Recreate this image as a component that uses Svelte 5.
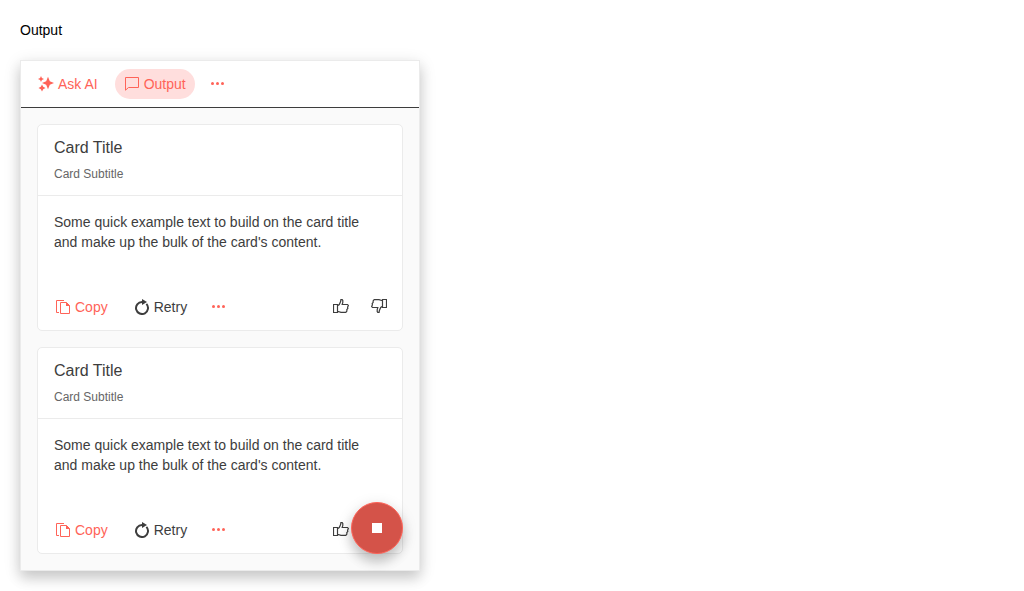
<script>
  let active = $state('output');
  const cards = [1, 2].map((id) => ({
    id,
    title: 'Card Title',
    subtitle: 'Card Subtitle',
    text: "Some quick example text to build on the card title and make up the bulk of the card's content."
  }));
</script>

{#snippet more()}
  <svg viewBox="0 0 16 16" aria-hidden="true">
    <g fill="currentColor">
      <circle cx="2.5" cy="7.5" r="1.5" /><circle cx="7.5" cy="7.5" r="1.5" /><circle cx="12.5" cy="7.5" r="1.5" />
    </g>
  </svg>
{/snippet}

<main>
  <div class="label">Output</div>
  <section class="prompt" aria-label="AI prompt">
    <header class="toolbar">
      <button class="btn primary" class:selected={active === 'ask'} onclick={() => (active = 'ask')}>
        <svg viewBox="0 0 16 16" aria-hidden="true">
          <path fill="currentColor" d="M10 .8 L11.8 5.2 L16 7 L11.8 8.8 L10 13.2 L8.2 8.8 L4 7 L8.2 5.2Z M3 0 L3.9 2.1 L6 3 L3.9 3.9 L3 6 L2.1 3.9 L0 3 L2.1 2.1Z M4 8.5 L5.2 10.8 L7.5 12 L5.2 13.2 L4 15.5 L2.8 13.2 L.5 12 L2.8 10.8Z" />
        </svg>
        <span>Ask AI</span>
      </button>
      <button class="btn primary" class:selected={active === 'output'} onclick={() => (active = 'output')}>
        <svg viewBox="0 0 16 16" aria-hidden="true">
          <path fill="none" stroke="currentColor" d="M1.5 1.5H14.5V11.5H4.5L1.5 14.2Z" />
        </svg>
        <span>Output</span>
      </button>
      <button class="btn primary square" aria-label="More views">{@render more()}</button>
    </header>

    <div class="content">
      {#each cards as card (card.id)}
        <article class="card">
          <div class="card-header">
            <div class="title">{card.title}</div>
            <div class="subtitle">{card.subtitle}</div>
          </div>
          <p>{card.text}</p>
          <div class="actions">
            <button class="btn primary">
              <svg viewBox="0 0 16 16" aria-hidden="true">
                <path fill="none" stroke="currentColor" d="M4 13.5H1.5V1.5H9M5.5 3.5H11.5L14.5 6.5V14.5H5.5Z" />
                <path fill="currentColor" d="M11 3L15 7H11Z" />
              </svg>
              <span>Copy</span>
            </button>
            <button class="btn">
              <svg viewBox="0 0 16 16" aria-hidden="true">
                <path fill="none" stroke="currentColor" stroke-width="2" d="M12.4 4.9A6 6 0 1 1 8 3" />
                <path fill="currentColor" d="M8 0L13 3L8 6Z" />
              </svg>
              <span>Retry</span>
            </button>
            <button class="btn primary square" aria-label="More actions">{@render more()}</button>
            <span class="spacer"></span>
            <button class="btn square" aria-label="Like">
              <svg viewBox="0 0 16 16" aria-hidden="true">
                <path fill="none" stroke="currentColor" stroke-width="1.2" d="M.5 5.5H4.5V13.5H.5ZM4.5 6.8L6.3 5.5L7.6 2.5L7.9.6H9.2L9.8 1.5V3.5L9.2 5.5H14.5L15.4 6.4L14.6 8.2L14.8 9.5L13.8 10.6L13.9 12L12.8 13.4H8L4.5 12.3" />
              </svg>
            </button>
            <button class="btn square" aria-label="Dislike">
              <svg viewBox="0 0 16 16" aria-hidden="true">
                <path fill="none" stroke="currentColor" stroke-width="1.2" d="M15.5 8.5H11.5V.5H15.5ZM11.5 7.2L9.7 8.5L8.4 11.5L8.1 13.4H6.8L6.2 12.5V10.5L6.8 8.5H1.5L.6 7.6L1.4 5.8L1.2 4.5L2.2 3.4L2.1 2L3.2.6H8L11.5 1.7" />
              </svg>
            </button>
          </div>
        </article>
      {/each}
    </div>

    <button class="fab" aria-label="Stop">
      <svg viewBox="0 0 16 16" aria-hidden="true"><path fill="currentColor" d="M3 3H13V13H3Z" /></svg>
    </button>
  </section>
</main>

<style>
  :global(body) {
    background: #fff;
  }
  main {
    display: flex;
    flex-direction: column;
    gap: 20px;
    padding: 20px;
    font: 14px/20px "Liberation Sans", Arial, sans-serif;
    color: #000;
  }
  .prompt {
    position: relative;
    box-sizing: border-box;
    width: 100%;
    max-width: 400px;
    border: 1px solid #ebebeb;
    background: #fafafa;
    color: #3d3d3d;
    box-shadow: 0 4px 16px rgba(0, 0, 0, 0.14), 0 8px 12px rgba(0, 0, 0, 0.12);
  }
  .toolbar {
    display: flex;
    gap: 8px;
    padding: 8px;
    background: #fff;
    border-bottom: 1px solid #3d3d3d;
  }
  .btn {
    display: inline-flex;
    align-items: center;
    justify-content: center;
    gap: 4px;
    box-sizing: border-box;
    height: 30px;
    padding: 4px 8px;
    border: 1px solid transparent;
    border-radius: 4px;
    background: none;
    color: #3d3d3d;
    font: inherit;
    cursor: pointer;
  }
  .toolbar .btn {
    border-radius: 15px;
  }
  .btn.primary {
    color: #ff6358;
  }
  .btn.selected {
    background: #ffdedd;
  }
  .btn.square {
    width: 30px;
    padding: 0;
  }
  svg {
    display: block;
    flex: none;
    width: 16px;
    height: 16px;
  }
  .content {
    display: flex;
    flex-direction: column;
    gap: 16px;
    padding: 16px;
  }
  .card {
    border: 1px solid #ebebeb;
    border-radius: 5px;
    background: #fff;
  }
  .card-header {
    display: flex;
    flex-direction: column;
    gap: 6px;
    padding: 12px 16px;
    border-bottom: 1px solid #ebebeb;
  }
  .title {
    font-size: 16px;
    line-height: 22px;
  }
  .subtitle {
    font-size: 12px;
    line-height: 18px;
    color: #666;
  }
  p {
    margin: 0;
    padding: 16px 16px 32px;
  }
  .actions {
    display: flex;
    gap: 8px;
    padding: 8px;
  }
  .spacer {
    flex: 1;
  }
  .fab {
    position: absolute;
    right: 16px;
    bottom: 16px;
    display: flex;
    align-items: center;
    justify-content: center;
    box-sizing: border-box;
    width: 52px;
    height: 52px;
    padding: 0;
    border: 1px solid #ff6358;
    border-radius: 50%;
    background: #d45349;
    color: #fff;
    box-shadow: 0 4px 16px rgba(0, 0, 0, 0.14), 0 8px 12px rgba(0, 0, 0, 0.16);
    cursor: pointer;
  }
</style>
